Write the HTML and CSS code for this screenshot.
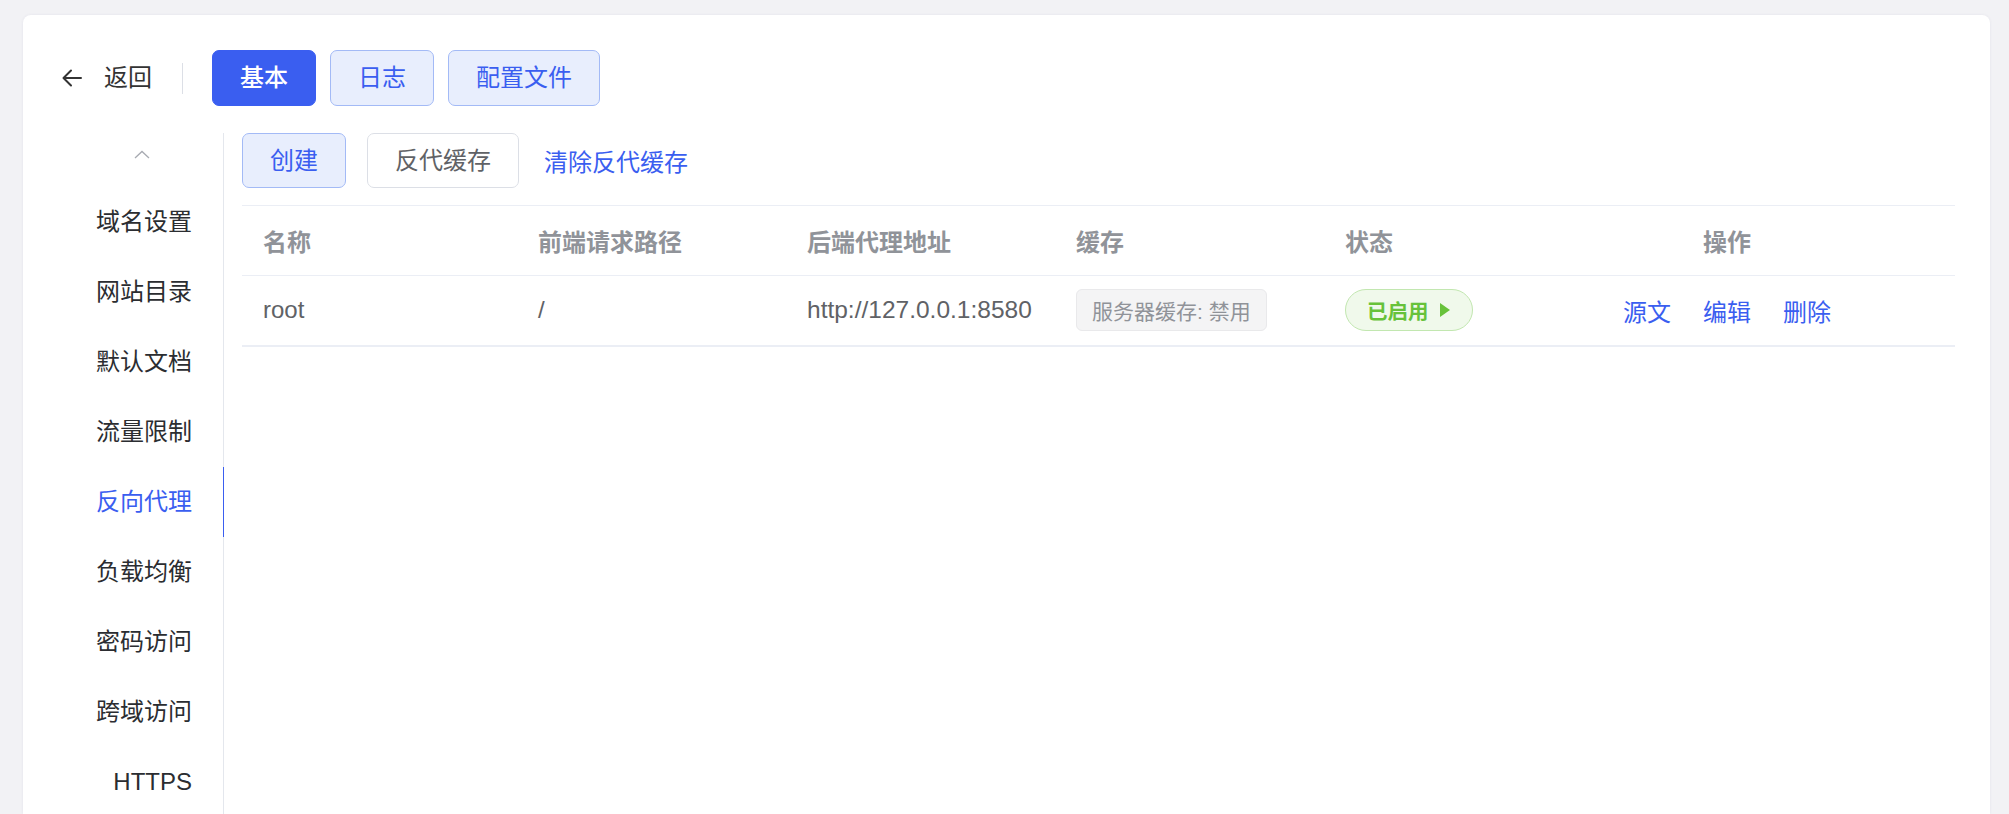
FILE: index.html
```html
<!DOCTYPE html>
<html lang="zh-CN">
<head>
<meta charset="utf-8">
<title>反向代理</title>
<link rel="stylesheet" href="styles.css">
</head>
<body>
<div class="page">
  <div class="card">
    <div class="topbar">
      <div class="back">
        <svg class="back-icon" width="20" height="18" viewBox="0 0 20 18"><path d="M19 9H2M9 1.5L1.5 9L9 16.5" fill="none" stroke="#333" stroke-width="2" stroke-linecap="round" stroke-linejoin="round"/></svg>
        <span class="back-text">返回</span>
      </div>
      <div class="divider"></div>
      <div class="tabs">
        <button class="btn btn-primary">基本</button>
        <button class="btn btn-light">日志</button>
        <button class="btn btn-light">配置文件</button>
      </div>
    </div>
    <div class="main">
      <nav class="sidebar">
        <div class="scroll-up">
          <svg width="16" height="9" viewBox="0 0 16 9"><path d="M1 8L8 1.5L15 8" fill="none" stroke="#a8abb2" stroke-width="1.3"/></svg>
        </div>
        <div class="nav-item">域名设置</div>
        <div class="nav-item">网站目录</div>
        <div class="nav-item">默认文档</div>
        <div class="nav-item">流量限制</div>
        <div class="nav-item active">反向代理</div>
        <div class="nav-item">负载均衡</div>
        <div class="nav-item">密码访问</div>
        <div class="nav-item">跨域访问</div>
        <div class="nav-item">HTTPS</div>
      </nav>
      <section class="content">
        <div class="toolbar">
          <button class="btn btn-light">创建</button>
          <button class="btn btn-plain">反代缓存</button>
          <button class="link-btn">清除反代缓存</button>
        </div>
        <table class="grid">
          <colgroup>
            <col class="c-name"><col class="c-path"><col class="c-addr"><col class="c-cache"><col class="c-status"><col class="c-ops">
          </colgroup>
          <thead>
            <tr>
              <th>名称</th>
              <th>前端请求路径</th>
              <th>后端代理地址</th>
              <th>缓存</th>
              <th>状态</th>
              <th class="center">操作</th>
            </tr>
          </thead>
          <tbody>
            <tr>
              <td>root</td>
              <td>/</td>
              <td class="addr">http://127.0.0.1:8580</td>
              <td><span class="tag-cache">服务器缓存: 禁用</span></td>
              <td><span class="tag-status">已启用<span class="tri"></span></span></td>
              <td class="center">
                <div class="ops">
                  <a class="op">源文</a>
                  <a class="op">编辑</a>
                  <a class="op">删除</a>
                </div>
              </td>
            </tr>
          </tbody>
        </table>
      </section>
    </div>
  </div>
</div>
</body>
</html>
```

FILE: styles.css
```css
* { box-sizing: border-box; }
html, body {
  margin: 0;
  padding: 0;
  height: 100%;
  overflow: hidden;
}
body {
  background: #f2f2f5;
  font-family: "Liberation Sans", "Noto Sans CJK SC", sans-serif;
  font-size: 24px;
  color: #303133;
}
.page {
  padding: 15px 19px 0 23px;
  height: 100%;
}
.card {
  background: #ffffff;
  border-radius: 8px 8px 0 0;
  height: 100%;
  box-shadow: 0 0 3px rgba(60, 60, 120, 0.08);
  overflow: hidden;
}

/* top bar */
.topbar {
  display: flex;
  align-items: center;
  padding: 35px 0 0 39px;
  height: 91px;
}
.back {
  display: flex;
  align-items: center;
  color: #333333;
}
.back-icon { display: block; }
.back-text {
  margin-left: 22px;
  line-height: 56px;
}
.divider {
  width: 1px;
  height: 31px;
  background: #dcdfe6;
  margin: 0 29px 0 30px;
}
.tabs {
  display: flex;
  gap: 14px;
}
.btn {
  font-family: inherit;
  font-size: 24px;
  height: 56px;
  padding: 0 27px;
  border-radius: 7px;
  border: 1px solid transparent;
  cursor: pointer;
  line-height: 1;
}
.btn-primary {
  background: #3a5ef0;
  border-color: #3a5ef0;
  color: #ffffff;
  font-weight: 500;
}
.btn-light {
  background: #e8eefd;
  border-color: #a3baf6;
  color: #3a5ef0;
}
.btn-plain {
  background: #ffffff;
  border-color: #dcdfe6;
  color: #606266;
}
.link-btn {
  font-family: inherit;
  font-size: 24px;
  background: none;
  border: none;
  color: #3a5ef0;
  padding: 0;
  margin-left: 4px;
  height: 56px;
  cursor: pointer;
}

/* main area */
.main {
  display: flex;
  margin-top: 27px;
}
.sidebar {
  width: 201px;
  flex: none;
  border-right: 1px solid #e4e7ed;
  min-height: 700px;
}
.scroll-up {
  height: 54px;
  display: flex;
  justify-content: center;
  padding-top: 17px;
  padding-left: 38px;
}
.scroll-up svg { display: block; }
.nav-item {
  height: 70px;
  line-height: 70px;
  text-align: right;
  padding-right: 31px;
  color: #2b2d31;
  white-space: nowrap;
}
.nav-item.active {
  color: #3a5ef0;
  margin-right: -1px;
  border-right: 1px solid #3a5ef0;
  padding-right: 31px;
}

.content {
  flex: 1;
  padding: 0 35px 0 18px;
}
.toolbar {
  display: flex;
  align-items: center;
  gap: 21px;
  height: 55px;
}
.toolbar .btn { height: 55px; }

.grid {
  width: 100%;
  border-collapse: collapse;
  table-layout: fixed;
  margin-top: 17px;
  border-top: 1px solid #ebeef5;
}
.c-name { width: 275px; }
.c-path { width: 269px; }
.c-addr { width: 269px; }
.c-cache { width: 269px; }
.c-status { width: 175px; }
.c-ops { width: auto; }
.grid th, .grid td {
  text-align: left;
  padding: 0 0 0 21px;
  white-space: nowrap;
  font-size: 24px;
}
.grid th {
  height: 70px;
  color: #909399;
  font-weight: bold;
  border-bottom: 1px solid #ebeef5;
}
.grid td {
  height: 70px;
  color: #606266;
  border-bottom: 2px solid #ebeef5;
}
.grid td.addr { font-size: 24.5px; }
.grid .center {
  text-align: center;
  padding-left: 0;
}
.tag-cache {
  display: inline-flex;
  align-items: center;
  height: 42px;
  padding: 0 15px;
  background: #f4f4f5;
  border: 1px solid #e9e9eb;
  border-radius: 6px;
  color: #909399;
  font-size: 21px;
  vertical-align: middle;
}
.tag-status {
  display: inline-flex;
  align-items: center;
  height: 42px;
  padding: 0 22px 0 21px;
  background: #f0f9eb;
  border: 1px solid #c2e7b0;
  border-radius: 21px;
  color: #67c23a;
  font-size: 20.5px;
  font-weight: bold;
  vertical-align: middle;
}
.tri {
  display: inline-block;
  width: 0;
  height: 0;
  margin-left: 11px;
  border-top: 7.5px solid transparent;
  border-bottom: 7.5px solid transparent;
  border-left: 10px solid #67c23a;
}
.ops {
  display: inline-flex;
  gap: 32px;
}
.op {
  color: #3a5ef0;
  cursor: pointer;
}
```
